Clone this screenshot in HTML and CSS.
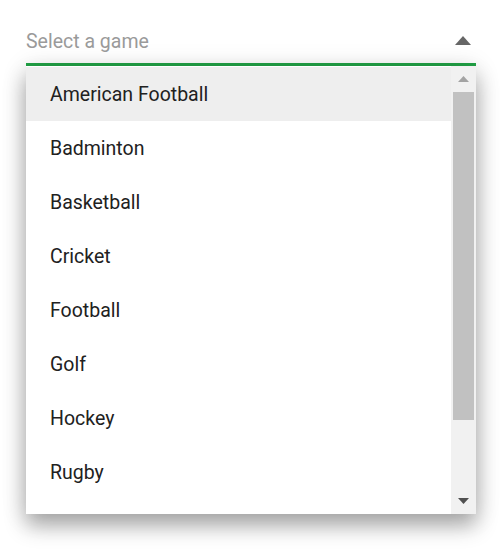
FILE: index.html
```html
<!DOCTYPE html>
<html lang="en">
<head>
    <meta charset="UTF-8">
    <meta name="viewport" content="width=device-width, initial-scale=1.0">
    <title>Select a game</title>
    <link rel="stylesheet" href="styles.css">
</head>
<body>
    <div class="dropdown">
        <div class="field">
            <span class="placeholder">Select a game</span>
            <svg class="caret" width="16" height="9" viewBox="0 0 16 9">
                <polygon points="0,9 8,0 16,9" fill="#666"/>
            </svg>
        </div>
        <div class="popup">
            <ul class="list">
                <li class="item active">American Football</li>
                <li class="item">Badminton</li>
                <li class="item">Basketball</li>
                <li class="item">Cricket</li>
                <li class="item">Football</li>
                <li class="item">Golf</li>
                <li class="item">Hockey</li>
                <li class="item">Rugby</li>
            </ul>
            <div class="scrollbar">
                <div class="scroll-btn">
                    <svg width="11" height="6" viewBox="0 0 11 6"><polygon points="0,6 5.5,0 11,6" fill="#a3a3a3"/></svg>
                </div>
                <div class="track">
                    <div class="thumb"></div>
                </div>
                <div class="scroll-btn">
                    <svg width="11" height="6" viewBox="0 0 11 6"><polygon points="0,0 11,0 5.5,6" fill="#505050"/></svg>
                </div>
            </div>
        </div>
    </div>
</body>
</html>
```

FILE: styles.css
```css
body {
    margin: 0;
    min-height: 556px;
    background-color: #fff;
    font-family: Roboto, "Noto Sans", sans-serif;
}

.dropdown {
    width: 450px;
    margin: 26px 0 0 26px;
}

.field {
    display: flex;
    align-items: center;
    justify-content: space-between;
    height: 37px;
    border-bottom: 3px solid #22a447;
}

.placeholder {
    font-size: 19.5px;
    color: #9a9a9a;
    margin-top: -7px;
}

.caret {
    margin-right: 5px;
    margin-top: -8px;
}

.popup {
    display: flex;
    height: 448px;
    background-color: #fff;
    box-shadow: 0 12px 20px rgba(0, 0, 0, 0.3), 0 2px 24px rgba(0, 0, 0, 0.14);
    overflow: hidden;
}

.list {
    flex: 1;
    list-style: none;
    margin: 0;
    padding: 1px 0 0;
    overflow: hidden;
}

.item {
    height: 54px;
    line-height: 56px;
    padding-left: 24px;
    font-size: 19.5px;
    color: #212121;
}

.item.active {
    background-color: #eee;
}

.scrollbar {
    display: flex;
    flex-direction: column;
    width: 25px;
    background-color: #f1f1f1;
}

.scroll-btn {
    height: 26px;
    display: flex;
    align-items: center;
    justify-content: center;
}

.track {
    flex: 1;
    padding: 0 2px;
}

.thumb {
    height: 328px;
    background-color: #c1c1c1;
}
```
